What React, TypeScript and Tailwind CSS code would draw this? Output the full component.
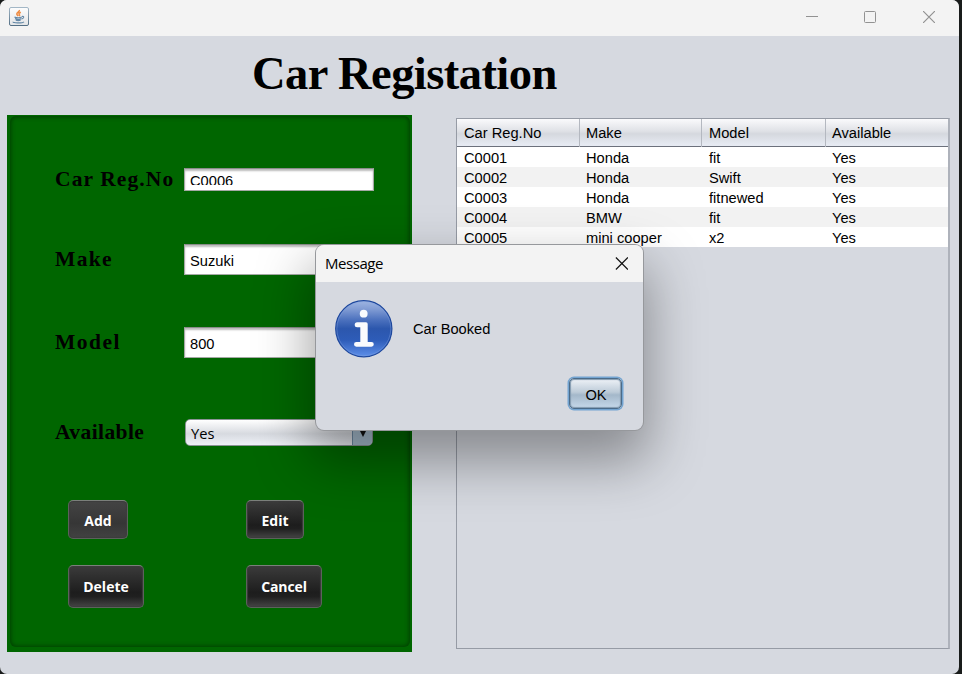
import React from "react";

const SANS = "font-['Liberation_Sans',Arial,sans-serif]";
const SERIF = "font-['Liberation_Serif','Times_New_Roman',serif]";
const UI = "font-['Open_Sans','Noto_Sans',sans-serif]";

const columns = ["Car Reg.No", "Make", "Model", "Available"];
const rows = [
  ["C0001", "Honda", "fit", "Yes"],
  ["C0002", "Honda", "Swift", "Yes"],
  ["C0003", "Honda", "fitnewed", "Yes"],
  ["C0004", "BMW", "fit", "Yes"],
  ["C0005", "mini cooper", "x2", "Yes"],
];

function JavaIcon() {
  return (
    <svg width="20" height="19" viewBox="0 0 20 19" fill="none">
      <defs>
        <linearGradient id="cup-bg" x1="0" y1="0" x2="0" y2="1">
          <stop offset="0" stopColor="#fdfdfd" />
          <stop offset="1" stopColor="#e3e5e7" />
        </linearGradient>
        <linearGradient id="cup-edge" x1="0" y1="0" x2="0" y2="1">
          <stop offset="0" stopColor="#a3b7c6" />
          <stop offset="1" stopColor="#536f85" />
        </linearGradient>
      </defs>
      <rect x=".5" y=".5" width="19" height="18" rx="1.5" fill="url(#cup-bg)" stroke="url(#cup-edge)" />
      <path d="M10.300 3c.8 1.700-2.500 2.400-2.500 4 0 1 .9 1.300 1.400 2M11.800 5.200c-1.900.9-2.300 1.500-1.400 2.500.4.500.2.9-.4 1.300" stroke="#ee8b42" strokeWidth="1.500" />
      <path d="M5.500 10.100c2 .7 6 .5 7.500-.1M6 11.600c1.500.7 5 .7 6.500 0M6.800 13.100c1.400.5 3.400.5 4.800 0" stroke="#6488a7" strokeWidth="1.200" />
      <path d="M13 9.500c2.400-.6 2.200 1.800-.2 2.400M4.200 14.700c-1 1.500 9 1.700 10.800.1" stroke="#6488a7" strokeWidth="1.100" />
    </svg>
  );
}

function InfoIcon() {
  return (
    <svg width="58" height="58" viewBox="0 0 58 58">
      <defs>
        <linearGradient id="info-fill" x1="0" y1="0" x2="0" y2="1">
          <stop offset="0" stopColor="#a0b6e2" />
          <stop offset=".15" stopColor="#819cd4" />
          <stop offset=".35" stopColor="#4a70bd" />
          <stop offset=".5" stopColor="#2c57ad" />
          <stop offset=".7" stopColor="#2e5cb8" />
          <stop offset="1" stopColor="#5d8fea" />
        </linearGradient>
      </defs>
      <circle cx="28.800" cy="28.700" r="28.100" fill="url(#info-fill)" stroke="#1d479d" strokeWidth="1.200" />
      <circle cx="28.800" cy="28.700" r="27" fill="none" stroke="#82a2df" strokeOpacity=".5" strokeWidth=".8" />
      <circle cx="28.700" cy="13.700" r="3.900" fill="#fafbfd" />
      <path d="M22.200 22.300h8.800a1.700 1.700 0 0 1 1.700 1.700v17.900h3.700a2.400 2.400 0 0 1 0 4.800h-15a2.400 2.400 0 0 1 0-4.800h3.900V27.300h-3.100a2.500 2.500 0 0 1 0-5z" fill="#fafbfd" />
    </svg>
  );
}

function Label({ children, spacing }: { children: string; spacing: string }) {
  return (
    <div className={`${SERIF} w-[129px] shrink-0 whitespace-nowrap pb-px text-[21.5px] font-bold leading-6 text-black ${spacing}`}>
      {children}
    </div>
  );
}

const field =
  "w-[190px] overflow-hidden border border-[#a5a9a5] border-t-[#8a8d8a] bg-white pl-[5px] text-[14.67px] text-black shadow-[inset_0_2px_2px_#bbb]";

const dark =
  "flex items-center justify-center rounded-[5px] border-[1.5px] border-[#5c625c] border-t-[#7b7f7b] text-sm font-bold text-white shadow-[inset_0_0_1px_1px_#3c3c3c]";
const darkFill = "bg-[linear-gradient(#3b3b3b,#1d1d1d_65%,#202020_75%,#454545)]";

function CarPanel() {
  return (
    <section className="h-[537px] w-[405px] bg-[#006600] pt-[1px] pr-[2px] pb-[5px] pl-[3px]">
      <div className="h-full rounded-[6px] pl-[45px] pt-[52px] shadow-[inset_0_0_4px_1px_#003f00]">
        <div className="flex h-[23px] items-center">
          <Label spacing="tracking-[1.1px]">Car Reg.No</Label>
          <div className={`${field} h-[23px] pt-[3px] leading-[18px]`}>
            <div className="h-[13px] overflow-hidden leading-[18px]">C0006</div>
          </div>
        </div>
        <div className="mt-[53px] flex h-[31px] items-center">
          <Label spacing="tracking-[1.35px]">Make</Label>
          <div className={`${field} h-[31px] pt-[2px] leading-[29px]`}>Suzuki</div>
        </div>
        <div className="mt-[52px] flex h-[31px] items-center">
          <Label spacing="tracking-[1.5px]">Model</Label>
          <div className={`${field} h-[31px] pt-[2px] leading-[29px]`}>800</div>
        </div>
        <div className="mt-[60px] flex h-[29px] items-center">
          <Label spacing="tracking-[0.4px]">Available</Label>
          <div className="ml-[1px] flex h-[27px] w-[188px] overflow-hidden rounded-[5px] border border-[#8b9396] bg-[linear-gradient(#fff,#d7dae0_55%,#eef1f7)] pl-[5px]">
            <span className={`${UI} flex-1 text-[14.67px] leading-[27px]`}>Yes</span>
            <span className="w-5 border-l border-[#6e8ba5] bg-[#a9bfd1] pt-[10px] pl-[6px]">
              <svg width="8" height="7" viewBox="0 0 8 7">
                <path d="M.5 0h7L4 7z" fill="#111" />
              </svg>
            </span>
          </div>
        </div>
        <div className={`${UI} ml-[13px] mt-[53px] grid grid-cols-[178px_76px] gap-y-[26px]`}>
          <button className={`${dark} h-[39px] w-[60px] bg-[linear-gradient(#444,#363636_60%,#424242)] pt-[2px]`}>Add</button>
          <button className={`${dark} ${darkFill} h-[39px] w-[58px] pt-[2px]`}>Edit</button>
          <button className={`${dark} ${darkFill} h-[43px] w-[76px]`}>Delete</button>
          <button className={`${dark} ${darkFill} h-[43px] w-[76px] tracking-[-0.1px]`}>Cancel</button>
        </div>
      </div>
    </section>
  );
}

function CarTable() {
  return (
    <section className="mt-[3px] h-[531px] w-[494px] border border-[#969ba5] border-r-2 border-r-[#aeb2bb] text-[14.67px] text-black">
      <div className="grid h-[28px] grid-cols-[123px_122px_124px_1fr] border-b border-[#6c717c] bg-[linear-gradient(#fafafc,#dfe1e6_45%,#d5d8de_55%,#e6eaf2_95%)]">
        {columns.map((c) => (
          <div key={c} className="border-r border-[#b4b8c0] pl-[6px] leading-[28px] first:pl-[7px] last:border-r-0 nth-[3]:pl-[7px]">
            {c}
          </div>
        ))}
      </div>
      <div>
        {rows.map((r) => (
          <div key={r[0]} className="grid h-5 grid-cols-[122px_123px_123px_1fr] bg-white even:bg-[#f2f2f2]">
            {r.map((v, i) => (
              <div key={i} className="pl-[7px] leading-[22px]">
                {v}
              </div>
            ))}
          </div>
        ))}
      </div>
    </section>
  );
}

function MessageDialog() {
  return (
    <div className="absolute left-[316px] top-[245px] h-[185px] w-[327px] rounded-[8px] bg-[#d6d9e0] shadow-[0_0_0_1px_#96989c,0_26px_54px_6px_rgba(0,0,0,0.36)]">
      <header className="flex h-[37px] items-center justify-between rounded-t-[8px] bg-[#f3f3f3] pl-[9px] pr-[15px]">
        <span className={`${UI} pb-px text-[15px] tracking-[-0.45px] text-black`}>Message</span>
        <svg className="mb-px" width="13" height="13" viewBox="0 0 13 13" stroke="#111" strokeWidth="1.200">
          <path d="M.9.5l12 12M12.900.5l-12 12" />
        </svg>
      </header>
      <div className="flex items-center gap-[20px] pl-[19px] pt-[18px]">
        <InfoIcon />
        <p className="text-[14.67px] text-black">Car Booked</p>
      </div>
      <div className="flex justify-end pr-[21px] pt-[20px]">
        <button className="flex h-[31px] w-[53px] items-center justify-center rounded-[5px] border-[1.5px] border-[#4b6b89] bg-[linear-gradient(#eef2f7,#bdcbd8_45%,#a4b8ca_55%,#c5d8ea)] pt-[2px] pl-px text-[14.67px] text-black shadow-[0_0_0_1.500px_#73a4d1,inset_0_0_1px_1px_#8299ae]">
          OK
        </button>
      </div>
    </div>
  );
}

export default function App() {
  return (
    <div className={`${SANS} h-[674px] w-[962px] overflow-hidden bg-[#191c1b]`}>
      <main className="relative h-[674px] w-[959px] overflow-hidden rounded-[7px] bg-[#d6d9e0]">
        <header className="flex h-9 items-center justify-between bg-[#f3f3f3] pl-[9px] pr-[24px] pb-[3px]">
          <JavaIcon />
          <div className="flex items-center">
            <svg className="mr-[46px]" width="12" height="12" viewBox="0 0 12 12" stroke="#929292">
              <path d="M0 5.500h12" />
            </svg>
            <svg className="mr-[47px]" width="12" height="12" viewBox="0 0 12 12" fill="none" stroke="#929292">
              <rect x=".5" y=".5" width="11" height="11" rx="1" />
            </svg>
            <svg width="12" height="12" viewBox="0 0 12 12" stroke="#929292" strokeWidth="1.200">
              <path d="M0 0l12 12M12 0L0 12" />
            </svg>
          </div>
        </header>
        <h1 className={`${SERIF} h-[79px] pl-[252px] text-[46.5px] font-bold leading-[75px] tracking-[-0.55px] text-black`}>
          Car Registation
        </h1>
        <div className="flex gap-[44px] pl-[7px]">
          <CarPanel />
          <CarTable />
        </div>
        <MessageDialog />
      </main>
    </div>
  );
}
